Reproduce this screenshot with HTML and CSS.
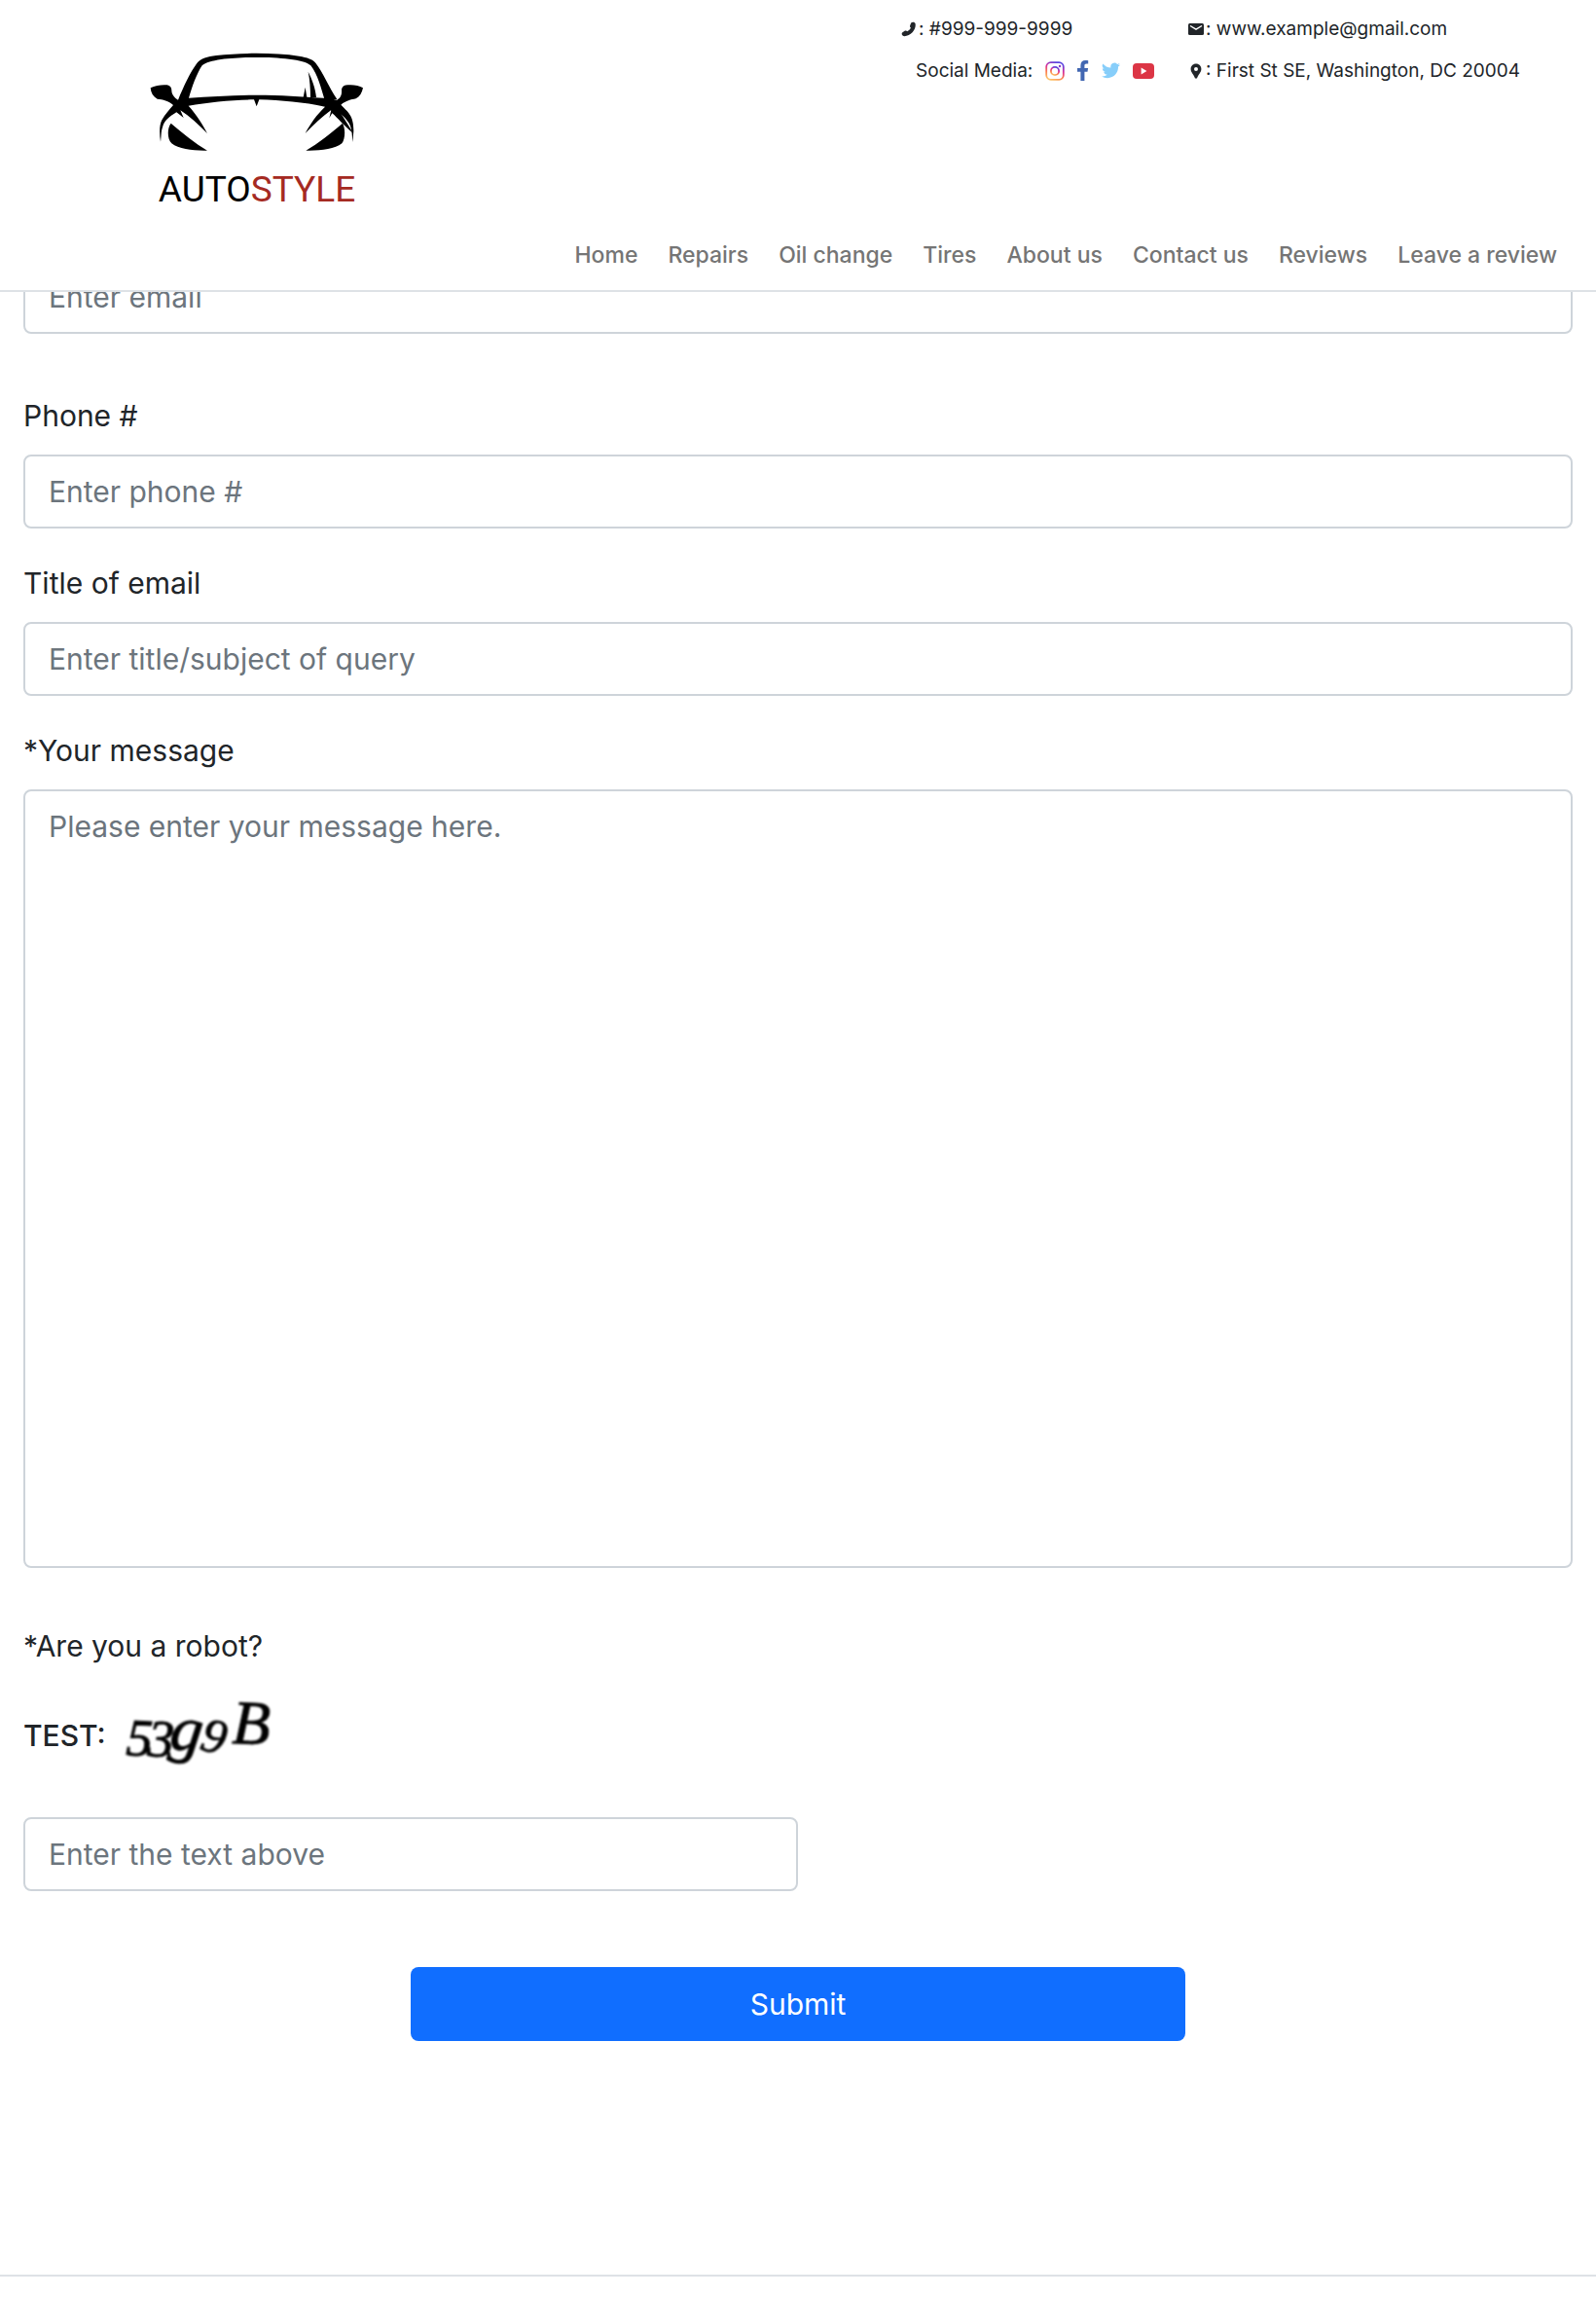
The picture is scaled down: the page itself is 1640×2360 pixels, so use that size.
FILE: index.html
```html
<!DOCTYPE html>
<html lang="en">
<head>
<meta charset="utf-8">
<meta name="viewport" content="width=device-width, initial-scale=1">
<title>Contact us | Autostyle</title>
<link rel="stylesheet" href="styles.css">
</head>
<body>
<header class="header">
  <div class="header-top">
    <a class="logo" href="#" aria-label="Autostyle">
      <svg class="logo-car" viewBox="45 42 660 309" aria-hidden="true">
        <path d="M132 188C150 145 168 105 190 75C202 60 222 54 250 51C330 42 430 42 505 53C530 57 548 63 556 74C580 105 595 145 622 186L584 188C572 150 563 110 541 82C520 62 440 57 374 57C310 57 230 62 206 82C188 110 176 145 165 182C230 178 300 173 374 173C450 173 510 178 580 182L622 188C635 180 637 170 636 155C638 146 645 142 655 142C672 140 690 144 702 151C699 166 692 178 680 184C665 187 650 190 634 203C655 225 674 235 673 285L670 318C668 290 668 270 655 254C645 240 635 232 624 224L670 290C645 268 625 245 607 229L598 244L604 219C575 240 550 265 524 291C542 258 558 235 585 209C520 195 450 189 382 187L374 208L366 187C300 187 225 195 164 206C190 235 207 262 222 291C195 265 170 240 139 220L149 243L127 226C105 240 90 250 84 272C79 285 80 305 78 317C74 290 74 265 82 250C92 232 105 218 117 204C103 190 85 187 68 185C55 178 48 166 47 151C62 144 82 140 98 142C108 144 112 150 112 158C112 170 120 180 132 188Z"/>
        <path d="M607 200L625 215L672 290C640 262 620 240 600 215Z"/>
        <path d="M518 180L524 149L529 180ZM540 180C540 155 538 125 533 101C545 125 555 150 558 180Z"/>
        <path d="M110 260C145 290 185 322 222 344C180 345 135 340 112 322C98 308 98 275 110 260ZM639 260C604 290 564 322 526 344C570 345 614 340 637 322C648 308 648 275 639 260Z"/>
      </svg>
      <span class="logo-name">AUTO<span class="logo-accent">STYLE</span></span>
    </a>
    <div class="contact">
      <span class="contact-item">
        <svg class="icon" viewBox="0 0 16 16" aria-hidden="true"><path d="M10.200 1.600C11.500.400 14.200.600 14.700 2.800C15.400 9 9.500 15 3.400 15.200C1.200 15.300 0 12.800 1.100 11.500L4 9.600C5 9.200 5.800 9.500 6.200 10.300C7.800 9.600 9.200 8 9.900 6.500C9 6 8.800 5 9.200 4Z"/></svg>: #999-999-9999
      </span>
      <span class="contact-item">
        <svg class="icon" viewBox="0 0 16 16" aria-hidden="true"><rect x="0" y="2" width="16" height="12" rx="1.5"/><path d="M2 4.5L8 8.2L14 4.5" fill="none" stroke="#fff" stroke-width="1.4"/></svg>: www.example@gmail.com
      </span>
      <span class="contact-item social">
        <span>Social Media:</span>
        <a href="#" aria-label="Instagram"><svg width="20" height="20" viewBox="0 0 20 20">
          <defs><linearGradient id="insta" x1="0.2" y1="1" x2="0.6" y2="0"><stop offset="0" stop-color="#fdc468"/><stop offset=".35" stop-color="#fa7b4e"/><stop offset=".65" stop-color="#d82d9a"/><stop offset="1" stop-color="#5a45e0"/></linearGradient></defs>
          <g fill="none" stroke="url(#insta)" stroke-width="1.8"><rect x="1.2" y="1.2" width="17.6" height="17.6" rx="4.6"/><circle cx="10" cy="10" r="4.1"/></g><circle cx="15" cy="5" r="1.2" fill="#8a3ac8"/></svg></a>
        <a href="#" aria-label="Facebook"><svg width="12" height="21" viewBox="0 0 12 21"><path fill="#4267b2" d="M3.4 21V11.8H0V8H3.4V5.2C3.4 1.8 5.3 0 8.4 0C9.8 0 11.2.2 11.2.2V3.6H9.5C7.9 3.6 7.4 4.5 7.4 5.6V8H11.1L10.5 11.8H7.4V21Z"/></svg></a>
        <a href="#" aria-label="Twitter"><svg width="19" height="17" viewBox="0 0 24 20"><path fill="#87cefa" d="M24 2.4c-.9.4-1.8.7-2.8.8 1-.6 1.800-1.600 2.200-2.700-1 .6-2 1-3.100 1.200A4.900 4.900 0 0 0 11.900 6.200C7.700 6 4.100 4 1.700 1A4.900 4.900 0 0 0 3.200 7.600c-.8 0-1.600-.2-2.200-.6v.1c0 2.400 1.700 4.400 3.900 4.800-.7.2-1.500.2-2.200.1.600 2 2.400 3.400 4.600 3.400A9.900 9.900 0 0 1 0 17.500 14 14 0 0 0 7.500 19.700c9.100 0 14-7.500 14-14v-.6A10 10 0 0 0 24 2.400Z"/></svg></a>
        <a href="#" aria-label="YouTube"><svg width="22" height="16" viewBox="0 0 22 16"><rect width="22" height="16" rx="4" fill="#dc3545"/><path fill="#fff" d="M8.600 4.600L14.400 8L8.600 11.400Z"/></svg></a>
      </span>
      <span class="contact-item">
        <svg class="icon" viewBox="0 0 16 16" aria-hidden="true"><path fill-rule="evenodd" d="M8 .5C4.700.5 2.600 2.900 2.600 6C2.600 9.500 6 11.800 7 15.500H9C10 11.800 13.400 9.500 13.400 6C13.400 2.900 11.300.5 8 .5ZM8 4A2 2 0 1 1 8 8A2 2 0 1 1 8 4Z"/></svg>: First St SE, Washington, DC 20004
      </span>
    </div>
  </div>
  <nav class="nav">
    <a href="#">Home</a>
    <a href="#">Repairs</a>
    <a href="#">Oil change</a>
    <a href="#">Tires</a>
    <a href="#">About us</a>
    <a href="#">Contact us</a>
    <a href="#">Reviews</a>
    <a href="#">Leave a review</a>
  </nav>
</header>
<main>
  <form class="form">
    <input class="control control-email" type="email" placeholder="Enter email" aria-label="Email">
    <div class="field">
      <label for="phone">Phone #</label>
      <input class="control" id="phone" type="tel" placeholder="Enter phone #">
    </div>
    <div class="field">
      <label for="title">Title of email</label>
      <input class="control" id="title" type="text" placeholder="Enter title/subject of query">
    </div>
    <div class="field field-message">
      <label for="message">*Your message</label>
      <textarea class="control control-message" id="message" placeholder="Please enter your message here."></textarea>
    </div>
    <div class="captcha">
      <label for="captcha">*Are you a robot?</label>
      <div class="captcha-test">
        <span>TEST:</span>
        <svg class="captcha-code" width="180" height="80" viewBox="0 0 180 80" role="img" aria-label="Distorted code">
          <text transform="translate(12 60) rotate(3)" font-size="54">5</text>
          <text transform="translate(34 61) rotate(3)" font-size="54">3</text>
          <text transform="translate(56 53) rotate(8)" font-size="66">g</text>
          <text transform="translate(87 54) rotate(14)" font-size="50">9</text>
          <text transform="translate(121 48) rotate(2)" font-size="64">B</text>
        </svg>
      </div>
      <input class="control control-half" id="captcha" type="text" placeholder="Enter the text above">
    </div>
    <button class="submit" type="submit">Submit</button>
  </form>
</main>
<footer class="footer"></footer>
</body>
</html>
```
FILE: styles.css
```css
* { box-sizing: border-box; }

body {
  margin: 0;
  background: #fff;
  color: #212529;
  font: 30px/48px Inter, "Liberation Sans", sans-serif;
}

.header {
  position: sticky;
  top: 0;
  z-index: 10;
  background: #fff;
  border-bottom: 2px solid #dee2e6;
}

.header-top {
  display: flex;
  justify-content: space-between;
  align-items: flex-start;
  padding: 8px 78px 0 154px;
}

.logo {
  display: flex;
  flex-direction: column;
  align-items: center;
  gap: 16px;
  padding-top: 46px;
  text-decoration: none;
}

.logo-car {
  width: 220px;
  height: 103px;
  fill: #000;
}

.logo-name {
  font: 37px/44px Roboto, "Liberation Sans", sans-serif;
  color: #000;
}

.logo-accent { color: #a52a22; }

.contact {
  display: grid;
  grid-template-columns: 295px auto;
  font-size: 19px;
  line-height: 43px;
}

.contact-item {
  display: flex;
  align-items: center;
  gap: 2px;
}

.icon {
  width: 16px;
  height: 16px;
  fill: #212529;
}

.social {
  gap: 13px;
  padding-left: 15px;
}

.social a { display: flex; }

.nav {
  display: flex;
  justify-content: flex-end;
  gap: 31px;
  padding: 27px 40px 18px;
  font-size: 23px;
  line-height: 36px;
  font-weight: 500;
}

.nav a {
  color: #757575;
  text-decoration: none;
}

/* The first field slides under the sticky header. */
.form {
  display: flex;
  flex-direction: column;
  margin-top: -33px;
  padding: 0 24px 240px;
}

.field,
.captcha {
  display: flex;
  flex-direction: column;
  gap: 16px;
  margin-bottom: 32px;
}

.control {
  width: 100%;
  height: 76px;
  padding: 12px 24px;
  border: 2px solid #ced4da;
  border-radius: 8px;
  background: #fff;
  color: #212529;
  font: inherit;
}

.control::placeholder {
  color: #6c757d;
  opacity: 1;
}

.control-email { margin-bottom: 60px; }

.control-message {
  height: 800px;
  resize: none;
}

.field-message { margin-bottom: 56px; }

.captcha { gap: 0; margin-bottom: 78px; }

.captcha-test {
  display: flex;
  align-items: center;
  gap: 8px;
  margin: 28px 0 44px;
  font-weight: 500;
}

.captcha-code {
  overflow: visible;
  filter: blur(1px);
  font-family: "Liberation Serif", serif;
  font-style: italic;
  font-weight: 400;
  stroke: #000;
}

.control-half { width: 50%; }

.submit {
  align-self: center;
  width: 50%;
  height: 76px;
  border: 0;
  border-radius: 8px;
  background: #106eff;
  color: #fff;
  font: inherit;
}

.footer {
  border-top: 2px solid #dee2e6;
}
```
